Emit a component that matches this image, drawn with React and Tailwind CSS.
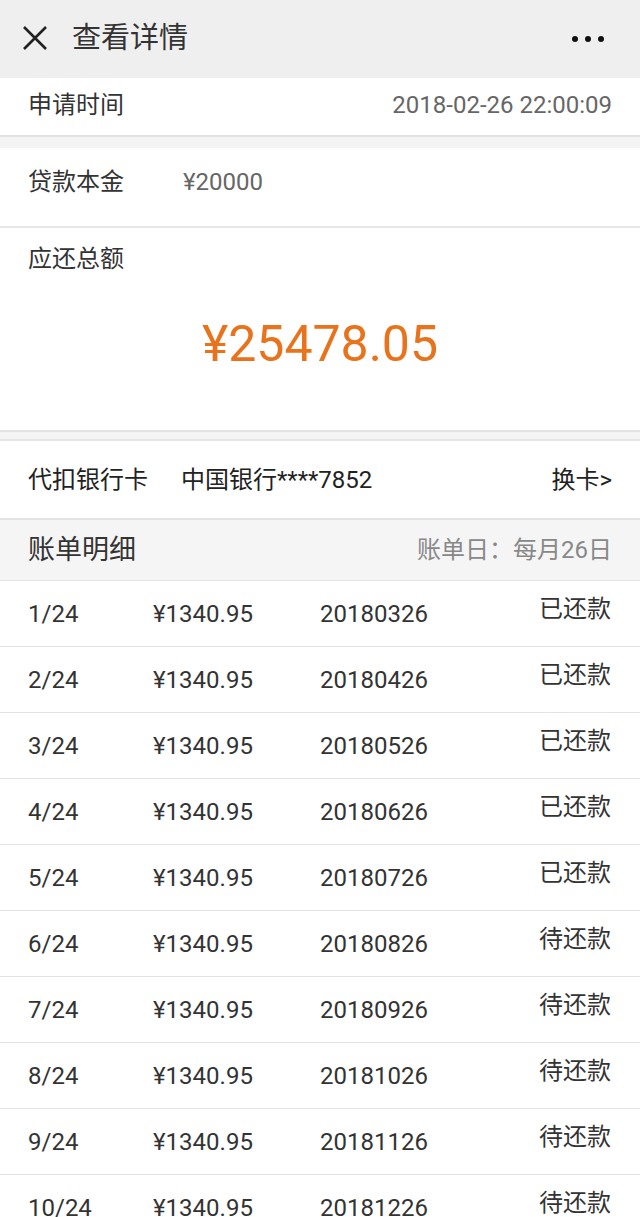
const font = { fontFamily: 'Roboto, "Noto Sans CJK SC", sans-serif' };

const bills = [
  ["1/24", "20180326", "已还款"],
  ["2/24", "20180426", "已还款"],
  ["3/24", "20180526", "已还款"],
  ["4/24", "20180626", "已还款"],
  ["5/24", "20180726", "已还款"],
  ["6/24", "20180826", "待还款"],
  ["7/24", "20180926", "待还款"],
  ["8/24", "20181026", "待还款"],
  ["9/24", "20181126", "待还款"],
  ["10/24", "20181226", "待还款"],
];

const BillRow = ({ period, date, status }) => (
  <div className="flex h-[66px] items-center border-b border-[#e3e3e3] bg-white pl-[28px] pr-[29px] text-[24px] text-[#333]">
    <span className="w-[125px]">{period}</span>
    <span className="w-[167px]">¥1340.95</span>
    <span className="flex-1">{date}</span>
    <span className="mb-[10px]">{status}</span>
  </div>
);

export default function App() {
  return (
    <div className="h-[1217px] w-[640px] overflow-hidden bg-[#f4f4f4]" style={font}>
      {/* header */}
      <div className="flex h-[78px] items-center bg-[#efefef] pl-[22px] pr-[36px]">
        <svg width="26" height="26" viewBox="0 0 26 26" className="mb-[2px]">
          <path d="M2 2 L24 24 M24 2 L2 24" stroke="#222" strokeWidth="2.6" fill="none" />
        </svg>
        <span className="ml-[24px] text-[29px] text-[#333]">查看详情</span>
        <div className="ml-auto flex gap-[7px]">
          <span className="h-[6px] w-[6px] rounded-full bg-[#111]" />
          <span className="h-[6px] w-[6px] rounded-full bg-[#111]" />
          <span className="h-[6px] w-[6px] rounded-full bg-[#111]" />
        </div>
      </div>

      {/* apply time */}
      <div className="flex h-[59px] items-center border-b-2 border-[#e2e2e2] bg-white pl-[28px] pr-[28px]">
        <span className="mb-[4px] text-[24px] text-[#333]">申请时间</span>
        <span className="mb-[4px] ml-auto text-[24px] text-[#666]">2018-02-26 22:00:09</span>
      </div>
      <div className="h-[11px] bg-[#f4f4f4]" />

      {/* principal + total */}
      <div className="bg-white">
        <div className="flex h-[80px] items-center border-b-2 border-[#e6e6e6] pl-[28px]">
          <span className="mb-[10px] w-[155px] text-[24px] text-[#333]">贷款本金</span>
          <span className="mb-[10px] text-[24px] text-[#666]">¥20000</span>
        </div>
        <div className="flex h-[204px] flex-col border-b-2 border-[#e3e3e3]">
          <span className="pl-[28px] pt-[15px] text-[24px] leading-[32px] text-[#333]">应还总额</span>
          <span className="mt-[41px] text-center text-[50px] leading-[56px] text-[#e8731c]">¥25478.05</span>
        </div>
      </div>
      <div className="h-[9px] border-b-2 border-[#e6e6e6] bg-[#f4f4f4]" />

      {/* bank card */}
      <div className="flex h-[79px] items-center border-b-2 border-[#e3e3e3] bg-white pl-[28px] pr-[28px] text-[24px] text-[#222]">
        <span className="w-[153px]">代扣银行卡</span>
        <span>中国银行****7852</span>
        <span className="ml-auto">换卡&gt;</span>
      </div>

      {/* bill header */}
      <div className="flex h-[61px] items-center border-b border-[#e3e3e3] bg-[#f5f5f5] pl-[28px] pr-[28px]">
        <span className="text-[27px] text-[#333]">账单明细</span>
        <span className="ml-auto text-[24px] text-[#888]">账单日：每月26日</span>
      </div>

      {bills.map(([period, date, status]) => (
        <BillRow key={period} period={period} date={date} status={status} />
      ))}
    </div>
  );
}
